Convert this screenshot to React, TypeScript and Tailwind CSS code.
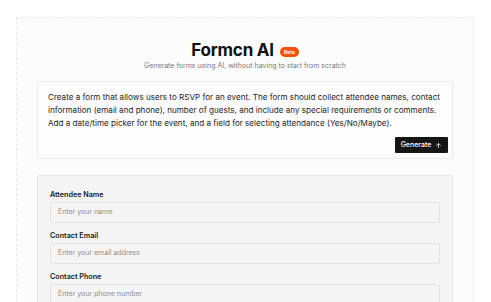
import React from 'react';
import { ArrowUp } from 'lucide-react';

const fields = [
  { label: 'Attendee Name', placeholder: 'Enter your name' },
  { label: 'Contact Email', placeholder: 'Enter your email address' },
  { label: 'Contact Phone', placeholder: 'Enter your phone number' },
];

export default function App() {
  return (
    <div className="h-[302px] w-[491px] overflow-hidden bg-white pt-[17px] font-['Inter',sans-serif]">
      <div className="ml-4 w-[458px] border border-dashed border-[#e8e8e8] bg-[#fcfcfc] px-[20px] pt-[22px] pb-6">
        {/* Header */}
        <div className="flex flex-col items-center">
          <div className="flex items-center gap-[6px]">
            <h1 className="text-[17px] font-bold leading-[20px] tracking-[-0.2px] text-[#111]">Formcn AI</h1>
            <span className="mt-[4px] rounded-full bg-[#f5500a] px-[4px] text-[5px] font-semibold leading-[10px] text-white">
              Beta
            </span>
          </div>
          <p className="mt-[1px] text-[7px] leading-[10px] text-[#7a7a7a]">
            Generate forms using AI, without having to start from scratch
          </p>
        </div>

        {/* Prompt */}
        <div className="mt-[10px] flex flex-col rounded-[2px] border border-[#ebebeb] bg-[#fdfdfd] pl-[10px] pr-[4px] pt-[9px] pb-[5px]">
          <p className="pr-[4px] text-[8.1px] leading-[13px] text-[#262626]">
            Create a form that allows users to RSVP for an event. The form should collect attendee names, contact
            information (email and phone), number of guests, and include any special requirements or comments.
            Add a date/time picker for the event, and a field for selecting attendance (Yes/No/Maybe).
          </p>
          <div className="mt-[7px] flex justify-end">
            <button className="flex h-[16px] w-[53px] items-center justify-center gap-[4px] rounded-[1px] bg-[#161616] text-[7px] font-medium text-white">
              Generate
              <ArrowUp size={7} strokeWidth={2.5} />
            </button>
          </div>
        </div>

        {/* Form */}
        <div className="mt-[16px] flex flex-col gap-[8px] rounded-[2px] border border-[#e6e6e6] bg-[#f5f5f5] px-[12px] pt-[14px] pb-4">
          {fields.map((f) => (
            <div key={f.label} className="flex flex-col gap-[3px]">
              <label className="text-[7.2px] font-semibold leading-[9px] text-[#171717]">{f.label}</label>
              <div className="flex h-[21px] items-center rounded-[2px] border border-[#e2e2e2] bg-[#f5f5f5] px-[7px] text-[7px] text-[#8c8c8c]">
                {f.placeholder}
              </div>
            </div>
          ))}
        </div>
      </div>
    </div>
  );
}
